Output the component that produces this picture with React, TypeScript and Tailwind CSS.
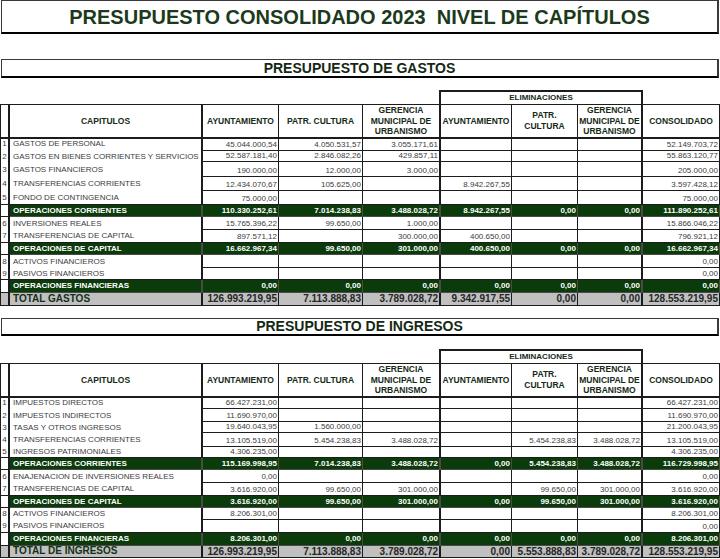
import React from 'react'

type Kind = 'data' | 'sub' | 'total'
type Row = { n?: string; label: string; kind: Kind; h: number; v: string[] }

const COLS = 'grid grid-cols-[10px_193px_76px_84px_76px_73px_66px_65px_77px]'
// vertical borders per column (the thick lines sit at x=10, 203, 439 and 643)
const VB = [
  'border-l border-r-2',
  'border-r-2',
  'border-r',
  'border-r',
  '',
  'border-l-2 border-r',
  'border-r',
  'border-r-2',
  'border-r',
]
const H: Record<number, string> = {
  11: 'h-[11px]',
  12: 'h-[12px]',
  13: 'h-[13px]',
  14: 'h-[14px]',
  15: 'h-[15px]',
}

const e = ''

const gastos: Row[] = [
  { n: '1', label: 'GASTOS DE PERSONAL', kind: 'data', h: 14, v: ['45.044.000,54', '4.050.531,57', '3.055.171,61', e, e, e, '52.149.703,72'] },
  { n: '2', label: 'GASTOS EN BIENES CORRIENTES Y SERVICIOS', kind: 'data', h: 11, v: ['52.587.181,40', '2.846.082,26', '429.857,11', e, e, e, '55.863.120,77'] },
  { n: '3', label: 'GASTOS FINANCIEROS', kind: 'data', h: 15, v: ['190.000,00', '12.000,00', '3.000,00', e, e, e, '205.000,00'] },
  { n: '4', label: 'TRANSFERENCIAS CORRIENTES', kind: 'data', h: 14, v: ['12.434.070,67', '105.625,00', e, '8.942.267,55', e, e, '3.597.428,12'] },
  { n: '5', label: 'FONDO DE CONTINGENCIA', kind: 'data', h: 14, v: ['75.000,00', e, e, e, e, e, '75.000,00'] },
  { label: 'OPERACIONES CORRIENTES', kind: 'sub', h: 12, v: ['110.330.252,61', '7.014.238,83', '3.488.028,72', '8.942.267,55', '0,00', '0,00', '111.890.252,61'] },
  { n: '6', label: 'INVERSIONES REALES', kind: 'data', h: 13, v: ['15.765.396,22', '99.650,00', '1.000,00', e, e, e, '15.866.046,22'] },
  { n: '7', label: 'TRANSFERENCIAS DE CAPITAL', kind: 'data', h: 13, v: ['897.571,12', e, '300.000,00', '400.650,00', e, e, '796.921,12'] },
  { label: 'OPERACIONES DE CAPITAL', kind: 'sub', h: 12, v: ['16.662.967,34', '99.650,00', '301.000,00', '400.650,00', '0,00', '0,00', '16.662.967,34'] },
  { n: '8', label: 'ACTIVOS FINANCIEROS', kind: 'data', h: 13, v: [e, e, e, e, e, e, '0,00'] },
  { n: '9', label: 'PASIVOS FINANCIEROS', kind: 'data', h: 12, v: [e, e, e, e, e, e, '0,00'] },
  { label: 'OPERACIONES FINANCIERAS', kind: 'sub', h: 13, v: ['0,00', '0,00', '0,00', '0,00', '0,00', '0,00', '0,00'] },
  { label: 'TOTAL GASTOS', kind: 'total', h: 13, v: ['126.993.219,95', '7.113.888,83', '3.789.028,72', '9.342.917,55', '0,00', '0,00', '128.553.219,95'] },
]

const ingresos: Row[] = [
  { n: '1', label: 'IMPUESTOS DIRECTOS', kind: 'data', h: 13, v: ['66.427.231,00', e, e, e, e, e, '66.427.231,00'] },
  { n: '2', label: 'IMPUESTOS INDIRECTOS', kind: 'data', h: 13, v: ['11.690.970,00', e, e, e, e, e, '11.690.970,00'] },
  { n: '3', label: 'TASAS Y OTROS INGRESOS', kind: 'data', h: 11, v: ['19.640.043,95', '1.560.000,00', e, e, e, e, '21.200.043,95'] },
  { n: '4', label: 'TRANSFERENCIAS CORRIENTES', kind: 'data', h: 14, v: ['13.105.519,00', '5.454.238,83', '3.488.028,72', e, '5.454.238,83', '3.488.028,72', '13.105.519,00'] },
  { n: '5', label: 'INGRESOS PATRIMONIALES', kind: 'data', h: 11, v: ['4.306.235,00', e, e, e, e, e, '4.306.235,00'] },
  { label: 'OPERACIONES CORRIENTES', kind: 'sub', h: 12, v: ['115.169.998,95', '7.014.238,83', '3.488.028,72', '0,00', '5.454.238,83', '3.488.028,72', '116.729.998,95'] },
  { n: '6', label: 'ENAJENACION DE INVERSIONES REALES', kind: 'data', h: 13, v: ['0,00', e, e, e, e, e, '0,00'] },
  { n: '7', label: 'TRANSFERENCIAS DE CAPITAL', kind: 'data', h: 13, v: ['3.616.920,00', '99.650,00', '301.000,00', e, '99.650,00', '301.000,00', '3.616.920,00'] },
  { label: 'OPERACIONES DE CAPITAL', kind: 'sub', h: 12, v: ['3.616.920,00', '99.650,00', '301.000,00', '0,00', '99.650,00', '301.000,00', '3.616.920,00'] },
  { n: '8', label: 'ACTIVOS FINANCIEROS', kind: 'data', h: 12, v: ['8.206.301,00', e, e, e, e, e, '8.206.301,00'] },
  { n: '9', label: 'PASIVOS FINANCIEROS', kind: 'data', h: 13, v: [e, e, e, e, e, e, '0,00'] },
  { label: 'OPERACIONES FINANCIERAS', kind: 'sub', h: 13, v: ['8.206.301,00', '0,00', '0,00', '0,00', '0,00', '0,00', '8.206.301,00'] },
  { label: 'TOTAL DE INGRESOS', kind: 'total', h: 12, v: ['126.993.219,95', '7.113.888,83', '3.789.028,72', '0,00', '5.553.888,83', '3.789.028,72', '128.553.219,95'] },
]

function SectionBox({ title }: { title: string }) {
  return (
    <div className="mx-px flex h-full items-center justify-center border border-b-2 border-r-2 border-[#3a3a3a] border-b-black text-[14px] font-bold text-[#142814]">
      {title}
    </div>
  )
}

function HeaderRows() {
  const head = 'flex items-center justify-center border-t border-b-2 border-[#1c1c1c] text-center text-[8.5px] font-bold leading-[10.5px] text-[#162a16]'
  return (
    <>
      <div className={`${COLS} h-[14px]`}>
        <div className="col-span-5" />
        <div className="col-span-3 flex items-center justify-center border-x-2 border-t-2 border-[#1c1c1c] text-[8px] font-bold text-[#162a16]">
          ELIMINACIONES
        </div>
        <div />
      </div>
      <div className={`${COLS} h-[33px]`}>
        <div className={`${VB[0]} ${head}`} />
        <div className={`${VB[1]} ${head}`}>CAPITULOS</div>
        <div className={`${VB[2]} ${head}`}>AYUNTAMIENTO</div>
        <div className={`${VB[3]} ${head}`}>PATR. CULTURA</div>
        <div className={`${VB[4]} ${head}`}>
          GERENCIA
          <br />
          MUNICIPAL DE
          <br />
          URBANISMO
        </div>
        <div className={`${VB[5]} ${head}`}>AYUNTAMIENTO</div>
        <div className={`${VB[6]} ${head}`}>
          PATR.
          <br />
          CULTURA
        </div>
        <div className={`${VB[7]} ${head}`}>
          GERENCIA
          <br />
          MUNICIPAL DE
          <br />
          URBANISMO
        </div>
        <div className={`${VB[8]} ${head}`}>CONSOLIDADO</div>
      </div>
    </>
  )
}

function TableRow({ row, next }: { row: Row; next?: Kind }) {
  const cells = [row.n ?? '', row.label, ...row.v]
  return (
    <div className={`${COLS} ${H[row.h]}`}>
      {cells.map((c, i) => {
        let cls = `${VB[i]} flex overflow-hidden whitespace-nowrap leading-none`
        if (row.kind === 'data') {
          cls += ' border-[#1c1c1c] text-[8px] text-[#3c3c3c]'
          if (i >= 2 || next !== 'data') cls += ' border-b'
          if (i === 0) cls += ' items-center justify-center'
          else if (i === 1) cls += ' items-center pl-[3px]'
          else cls += ' items-end justify-end pb-px pr-px'
        } else if (row.kind === 'sub') {
          cls += ' border-b'
          if (i === 0) cls += ' border-[#1c1c1c] bg-white'
          else cls += ' border-[#4a4a4a] bg-[#0b3a0b] text-[8px] font-bold text-white'
          if (i === 1) cls += ' items-center pl-[3px]'
          else if (i > 1) cls += ' items-center justify-end pr-px'
        } else {
          cls += ' border-b border-[#1c1c1c] bg-[#c0c0c0] text-[10px] font-bold'
          if (i === 1) cls += ' items-end pb-px pl-[3px] text-[#16301a]'
          else if (i > 1) cls += ' items-center justify-end pr-px text-[#262626]'
        }
        return (
          <div key={i} className={cls}>
            {c}
          </div>
        )
      })}
    </div>
  )
}

function Table({ rows }: { rows: Row[] }) {
  return (
    <div>
      <HeaderRows />
      {rows.map((r, i) => (
        <TableRow key={i} row={r} next={rows[i + 1]?.kind} />
      ))}
    </div>
  )
}

export default function App() {
  return (
    <div className="h-[559px] w-[720px] overflow-hidden bg-white font-['Liberation_Sans',Arial,sans-serif]">
      <div className="mx-px flex h-[34px] items-center justify-center whitespace-pre border border-b-2 border-r-2 border-[#3a3a3a] border-b-black text-[20px] font-bold text-[#1b3a1b]">
        PRESUPUESTO CONSOLIDADO 2023  NIVEL DE CAPÍTULOS
      </div>

      <div className="mt-[25px] h-[19px]">
        <SectionBox title="PRESUPUESTO DE GASTOS" />
      </div>
      <div className="mt-[12px]">
        <Table rows={gastos} />
      </div>

      <div className="mt-[12px] h-[18px]">
        <SectionBox title="PRESUPUESTO DE INGRESOS" />
      </div>
      <div className="mt-[13px]">
        <Table rows={ingresos} />
      </div>
    </div>
  )
}
